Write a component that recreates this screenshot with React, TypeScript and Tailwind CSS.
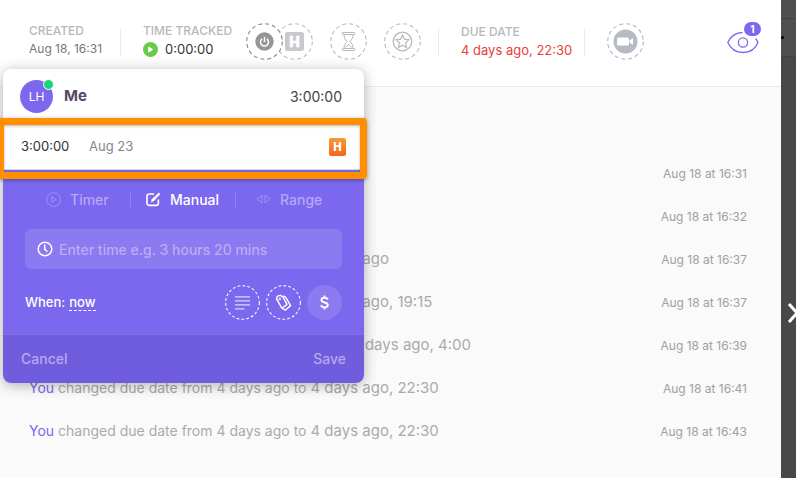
import React from 'react';

const activity = [
  { text: 'created this task', time: 'Aug 18 at 16:31' },
  { text: 'set the due date', time: 'Aug 18 at 16:32' },
  { from: '4 days ago', to: '4 days ago', time: 'Aug 18 at 16:37' },
  { from: '4 days ago', to: '4 days ago, 19:15', time: 'Aug 18 at 16:37' },
  { from: '4 days ago, 19:15', to: '4 days ago, 4:00', time: 'Aug 18 at 16:39' },
  { from: '4 days ago', to: '4 days ago, 22:30', time: 'Aug 18 at 16:41' },
  { from: '4 days ago', to: '4 days ago, 22:30', time: 'Aug 18 at 16:43' },
];

const RingButton = ({ label, size = 'w-[37px] h-[37px]', className = '', dash = '4 3', children }: any) => (
  <button aria-label={label} className={`block shrink-0 rounded-full ${size} ${className}`}>
    <svg viewBox="0 0 37 37" className="w-full h-full" fill="none" stroke="currentColor">
      {dash && <circle cx="18.5" cy="18.5" r="17.8" strokeWidth="1.1" strokeDasharray={dash} />}
      {children}
    </svg>
  </button>
);

const Divider = ({ className = '' }: any) => <div className={`w-px h-7 shrink-0 bg-[#ececec] ${className}`} />;

const Field = ({ label, className = '', children }: any) => (
  <div className={`shrink-0 whitespace-nowrap ${className}`}>
    <div className="text-[12px] leading-4 font-medium text-[#b8b8b8]">{label}</div>
    <div className="mt-px flex items-center leading-[18px]">{children}</div>
  </div>
);

const TaskHeader = () => (
  <header className="h-[87px] flex items-center bg-white border-b border-[#ececec] pl-[29px] pr-5 pb-[3px]">
    <Field label="CREATED" className="w-[91px] pb-0.5 text-[12px] text-[#777]">
      Aug 18, 16:31
    </Field>
    <Divider />
    <Field label="TIME TRACKED" className="w-[103px] ml-[22px] pb-0.5 text-[13px] text-[#333]">
      <button aria-label="Start timer" className="w-[15px] h-[15px] mr-[7px] rounded-full bg-[#67cb48]">
        <svg viewBox="0 0 15 15" fill="#fff">
          <path d="M5.2 5v5c0 .5.4.6.8.3l3.6-2.3c.4-.3.4-.7 0-1L6 4.700c-.4-.3-.8-.2-.8.3z" />
        </svg>
      </button>
      0:00:00
    </Field>
    <div className="flex shrink-0">
      <RingButton label="Toggl" className="relative z-10 bg-white text-[#858585]">
        <circle cx="18.500" cy="18.500" r="9.200" fill="#969696" stroke="none" />
        <path d="M16 15.800a4 4 0 1 0 5 0M18.500 14v5" stroke="#fff" strokeWidth="1.500" />
      </RingButton>
      <div className="-ml-[7px]">
        <RingButton label="Harvest" className="text-[#bcbcbc]">
          <rect x="9" y="9" width="19" height="19" rx="2.500" fill="#c9c7cf" stroke="none" />
          <text x="18.500" y="24" textAnchor="middle" fill="#fff" stroke="#fff" strokeWidth=".5" fontSize="15" fontWeight="900" fontFamily="Roboto, sans-serif">H</text>
        </RingButton>
      </div>
    </div>
    <RingButton label="Time estimate" className="ml-[17px] text-[#b9b9b9]">
      <path d="M13 9.500h11c1.200 0 1.200 2 0 2h-11c-1.200 0-1.200-2 0-2zM13 25.500h11c1.200 0 1.200 2 0 2h-11c-1.200 0-1.200-2 0-2z" />
      <path d="M14 11.500c0 4 1.200 5 3.200 7-2 2-3.200 3-3.200 7M23 11.500c0 4-1.200 5-3.200 7 2 2 3.200 3 3.200 7M15.500 24.500c1-1.500 2-2 3-2.300 1 .3 2 .8 3 2.300" />
    </RingButton>
    <RingButton label="Sprint points" className="ml-[17px] text-[#b9b9b9]">
      <circle cx="18.500" cy="18.500" r="9.300" strokeWidth="1.300" />
      <path d="M18.500 12l1.900 4.100 4.500.6-3.300 3.100.9 4.500-4-2.200-4 2.200.9-4.500-3.300-3.100 4.500-.6z" strokeWidth="1.200" />
    </RingButton>
    <Divider className="ml-[17px]" />
    <Field label="DUE DATE" className="w-[123px] ml-[22px] text-[13px] text-[#ea3d3d]">
      4 days ago, 22:30
    </Field>
    <Divider />
    <RingButton label="Start a call" className="ml-[22px] text-[#b0b5c0]">
      <circle cx="18.500" cy="18.500" r="12" fill="#b5bbc4" stroke="none" />
      <path d="M11.500 14.500h9a1.500 1.500 0 0 1 1.500 1.500v5a1.500 1.500 0 0 1-1.500 1.500h-9A1.500 1.500 0 0 1 10 21v-5a1.500 1.500 0 0 1 1.500-1.500zM22.500 17.500l3.500-2.500v7l-3.500-2.500z" fill="#fff" stroke="none" />
    </RingButton>
    <button aria-label="Watchers" className="relative ml-auto w-[34px] h-[30px] shrink-0">
      <svg viewBox="0 0 34 30" className="w-full h-full" fill="none" stroke="#7b68ee" strokeWidth="1.300">
        <path d="M15.500 5.500C8.500 5.500 3.500 10 .8 15.500 3.500 21.500 9 25.500 16 25.500s12.500-4 15-10c-.6-1.500-1.500-2.800-2.500-4" />
        <circle cx="16" cy="15.500" r="4.600" />
      </svg>
      <span className="absolute -top-[5px] right-0 w-[17px] h-[14px] rounded-full bg-[#7b68ee] text-white text-[10px] leading-[14px] font-bold">1</span>
    </button>
  </header>
);

const ActivityList = () => (
  <ul className="pt-[65px]">
    {activity.map((item, idx) => (
      <li key={idx} className="h-[43px] flex items-center justify-between pl-[29px] pr-[34px] whitespace-nowrap">
        <span className="text-[14px] text-[#aaa]">
          <a href="#you" className="text-[#7b68ee]">You</a>{' '}
          {item.text || (
            <>
              changed due date from {item.from} to <span className="text-[15px]">{item.to}</span>
            </>
          )}
        </span>
        <span className="text-[12px] text-[#a0a0a0]">{item.time}</span>
      </li>
    ))}
  </ul>
);

const TimePopup = () => (
  <section className="absolute left-[3px] top-[69px] w-[361px] rounded-lg bg-white shadow-[0_2px_14px_rgba(0,0,0,0.3)]">
    <div className="h-[55px] flex items-center px-[17px]">
      <div className="relative w-[33px] h-[33px] rounded-full bg-[#7b68ee] text-white text-[12px] flex items-center justify-center">
        LH
        <span className="absolute -top-px -right-px w-[11px] h-[11px] rounded-full bg-[#1bd47b] border border-white" />
      </div>
      <span className="ml-[11px] text-[15px] font-bold text-[#544b66]">Me</span>
      <span className="ml-auto mr-[5px] text-[14px] text-[#444]">3:00:00</span>
    </div>

    <div className="relative h-[46px] flex items-center px-[18px] border-b border-[#d5d5dc]">
      <span className="w-[68px] text-[13px] text-[#2f3037]">3:00:00</span>
      <span className="text-[13px] text-[#85868f]">Aug 23</span>
      <span className="ml-auto w-[17px] h-[18px] rounded-[2px] bg-linear-to-b from-[#f69a35] to-[#f3641f] text-white text-[12px] leading-[18px] font-black text-center font-[Roboto,sans-serif]">
        H
      </span>
      <div className="absolute -left-[6px] -right-[3px] -top-[6px] -bottom-[10px] border-[7px] border-[#ff8f00] rounded-[4px] shadow-[0_1px_4px_rgba(0,0,0,0.35),inset_0_1px_3px_rgba(0,0,0,0.3)]" />
    </div>

    <div className="bg-[#7b68ee] pt-[18px]">
      <div className="h-[22px] flex items-center text-[14px] font-medium text-[#b5a9f6]">
        <button className="flex items-center ml-[43px] w-[84px]">
          <svg viewBox="0 0 16 16" className="w-[15px] h-[15px] mr-[9px]" fill="none" stroke="#a094f3">
            <circle cx="8" cy="8" r="7.300" />
            <path d="M6.200 5v6l4.500-3z" />
          </svg>
          Timer
        </button>
        <div className="w-px h-[15px] bg-[#9384f1]" />
        <button className="flex items-center ml-[15px] w-[89px] text-white">
          <svg viewBox="0 0 15 15" className="w-[15px] h-[15px] mr-[9px]" fill="none" stroke="#fff" strokeWidth="1.600" strokeLinecap="round" strokeLinejoin="round">
            <path d="M7.500 2H3.200A2.200 2.200 0 0 0 1 4.200v7A2.200 2.200 0 0 0 3.200 13.400h7a2.200 2.200 0 0 0 2.200-2.200V8" />
            <path d="M5.500 9.500l.7-2.300L12.800 1l1.200 1.100-6.200 6.600z" fill="#fff" strokeWidth=".7" />
          </svg>
          Manual
        </button>
        <div className="w-px h-[15px] bg-[#9384f1]" />
        <button className="flex items-center ml-[20px]">
          <svg viewBox="0 0 15 12" className="w-[15px] h-3 mr-[9px]" fill="none" stroke="#a094f3">
            <path d="M6 2v8L1 6zM9 2v8l5-4z" />
          </svg>
          Range
        </button>
      </div>

      <label className="mt-[19px] mx-[22px] h-10 flex items-center rounded-md bg-[#8c7af0] pl-3">
        <svg viewBox="0 0 16 16" className="w-4 h-4 shrink-0 mr-[6px]" fill="none" stroke="#fff" strokeWidth="1.500" strokeLinecap="round">
          <circle cx="8" cy="8" r="6.800" />
          <path d="M7.700 4v4.200L10 10.300" />
        </svg>
        <input
          type="text"
          aria-label="Enter time"
          placeholder="Enter time e.g. 3 hours 20 mins"
          className="flex-1 min-w-0 bg-transparent text-[14px] font-medium text-white placeholder:text-[#b8adf6] focus:outline-none"
        />
      </label>

      <div className="mt-[15px] px-[22px] h-[37px] flex items-center text-[13px] font-medium text-white">
        <span>When:</span>
        <button className="ml-1 leading-4 border-b border-dashed border-white">now</button>
        <div className="ml-auto flex gap-[6px]">
          <RingButton label="Notes" dash="3 2.200" size="w-[35px] h-[35px]" className="text-white">
            <path d="M10.500 12.500h16M10.500 16.800h16M10.500 21h16M10.500 25.200h10" strokeWidth="1.400" stroke="#ddd8fc" />
          </RingButton>
          <RingButton label="Tags" dash="3 2.200" size="w-[35px] h-[35px]" className="text-white">
            <path d="M11 14.500l1.200-2.700 3-.8 2.500 1.500 4.500 8-4.800 3.800-1-.3z" strokeWidth="1.500" strokeLinejoin="round" />
            <path d="M18 11.500l2.700 1.300 5.300 9-5.500 4.700-3.800-2" strokeWidth="1.500" strokeLinejoin="round" />
            <circle cx="14.500" cy="14.800" r="1" />
          </RingButton>
          <RingButton label="Billable" dash="" size="w-[35px] h-[35px]" className="text-white bg-[#8c7af0]">
            <path d="M22 15.300c-.6-1.200-1.800-1.800-3.500-1.800-2 0-3.300.9-3.300 2.400 0 3.500 6.800 1.700 6.800 5.200 0 1.500-1.400 2.500-3.500 2.500-1.900 0-3.200-.8-3.700-2.200M18.500 11v2.500M18.500 23.500V26" strokeWidth="2" />
          </RingButton>
        </div>
      </div>
      <div className="h-[13px]" />
    </div>

    <footer className="h-[49px] flex items-center justify-between px-[18px] pb-0.5 rounded-b-lg border-t border-[#8272e0] bg-[#705ddd] text-[14px] font-medium text-[#b5a9f0]">
      <button>Cancel</button>
      <button>Save</button>
    </footer>
  </section>
);

const SideStrip = () => (
  <aside className="w-[15px] shrink-0 overflow-hidden bg-[#474947] flex flex-col">
    <div className="h-[19px] bg-[#4f4f4f] border-b border-[#424242]" />
    <div className="h-[38px] flex items-center bg-[#4f4f4f] border-b border-[#424242]">
      <span className="w-[3px] h-[3px] rounded-full bg-black" />
    </div>
    <button aria-label="Next task" className="mt-[245px] ml-[6px] w-4 h-[22px]">
      <svg viewBox="0 0 16 22" className="w-4 h-[22px]" fill="none" stroke="#fff" strokeWidth="3">
        <path d="M2 2l8 9-8 9" />
      </svg>
    </button>
  </aside>
);

export default function App() {
  return (
    <div className="min-h-screen flex overflow-hidden font-[Inter,sans-serif]">
      <main className="relative flex-1 min-w-0 bg-[#fafafa]">
        <TaskHeader />
        <ActivityList />
        <TimePopup />
      </main>
      <SideStrip />
    </div>
  );
}
